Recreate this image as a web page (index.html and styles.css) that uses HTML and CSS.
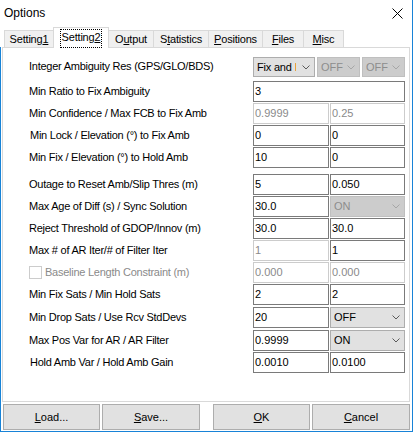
FILE: index.html
```html
<!DOCTYPE html>
<html>
<head>
<meta charset="utf-8">
<title>Options</title>
<link rel="stylesheet" href="styles.css">
</head>
<body>
<div class="window">
  <div class="titlebar">
    <span class="title">Options</span>
    <svg class="close" viewBox="0 0 11 11"><path d="M0.5 0.5L10.5 10.5M10.5 0.5L0.5 10.5" stroke="#000" stroke-width="1" fill="none"/></svg>
  </div>
  <div class="tabs">
    <div class="tab t-s1">Setting<u>1</u></div>
    <div class="tab tab-active t-s2"><span class="focus">Setting<u>2</u></span></div>
    <div class="tab t-out">O<u>u</u>tput</div>
    <div class="tab t-stat">S<u>t</u>atistics</div>
    <div class="tab t-pos"><u>P</u>ositions</div>
    <div class="tab t-files"><u>F</u>iles</div>
    <div class="tab t-misc"><u>M</u>isc</div>
  </div>
  <div class="client">
    <div class="panel">
      <div class="row row-first">
        <span class="label">Integer Ambiguity Res (GPS/GLO/BDS)</span>
        <div class="fields fields-3">
          <div class="combo combo-main"><span class="combo-text">Fix and<span class="caret"></span></span><svg class="chev" viewBox="0 0 8 5"><polyline points="0.5,0.5 4,4 7.5,0.5" fill="none" stroke="currentColor"/></svg></div>
          <div class="combo disabled"><span class="combo-text">OFF</span><svg class="chev" viewBox="0 0 8 5"><polyline points="0.5,0.5 4,4 7.5,0.5" fill="none" stroke="currentColor"/></svg></div>
          <div class="combo disabled"><span class="combo-text">OFF</span><svg class="chev" viewBox="0 0 8 5"><polyline points="0.5,0.5 4,4 7.5,0.5" fill="none" stroke="currentColor"/></svg></div>
        </div>
      </div>
      <div class="row row-gap4">
        <span class="label">Min Ratio to Fix Ambiguity</span>
        <div class="fields fields-1">
          <div class="edit">3</div>
        </div>
      </div>
      <div class="row">
        <span class="label">Min Confidence / Max FCB to Fix Amb</span>
        <div class="fields">
          <div class="edit disabled">0.9999</div>
          <div class="edit disabled">0.25</div>
        </div>
      </div>
      <div class="row">
        <span class="label shift">Min Lock / Elevation (°) to Fix Amb</span>
        <div class="fields">
          <div class="edit">0</div>
          <div class="edit">0</div>
        </div>
      </div>
      <div class="row">
        <span class="label">Min Fix / Elevation (°) to Hold Amb</span>
        <div class="fields">
          <div class="edit">10</div>
          <div class="edit">0</div>
        </div>
      </div>
      <div class="row row-gap6">
        <span class="label">Outage to Reset Amb/Slip Thres (m)</span>
        <div class="fields">
          <div class="edit">5</div>
          <div class="edit">0.050</div>
        </div>
      </div>
      <div class="row">
        <span class="label">Max Age of Diff (s) / Sync Solution</span>
        <div class="fields">
          <div class="edit">30.0</div>
          <div class="combo disabled"><span class="combo-text">ON</span><svg class="chev" viewBox="0 0 8 5"><polyline points="0.5,0.5 4,4 7.5,0.5" fill="none" stroke="currentColor"/></svg></div>
        </div>
      </div>
      <div class="row">
        <span class="label">Reject Threshold of GDOP/Innov (m)</span>
        <div class="fields">
          <div class="edit">30.0</div>
          <div class="edit">30.0</div>
        </div>
      </div>
      <div class="row">
        <span class="label">Max # of AR Iter/# of Filter Iter</span>
        <div class="fields">
          <div class="edit disabled">1</div>
          <div class="edit">1</div>
        </div>
      </div>
      <div class="row">
        <span class="label label-disabled"><span class="checkbox"></span>Baseline Length Constraint (m)</span>
        <div class="fields">
          <div class="edit disabled">0.000</div>
          <div class="edit disabled">0.000</div>
        </div>
      </div>
      <div class="row">
        <span class="label">Min Fix Sats / Min Hold Sats</span>
        <div class="fields">
          <div class="edit">2</div>
          <div class="edit">2</div>
        </div>
      </div>
      <div class="row row-gap2">
        <span class="label">Min Drop Sats / Use Rcv StdDevs</span>
        <div class="fields">
          <div class="edit">20</div>
          <div class="combo"><span class="combo-text">OFF</span><svg class="chev" viewBox="0 0 8 5"><polyline points="0.5,0.5 4,4 7.5,0.5" fill="none" stroke="currentColor"/></svg></div>
        </div>
      </div>
      <div class="row row-gap2">
        <span class="label">Max Pos Var for AR / AR Filter</span>
        <div class="fields">
          <div class="edit">0.9999</div>
          <div class="combo"><span class="combo-text">ON</span><svg class="chev" viewBox="0 0 8 5"><polyline points="0.5,0.5 4,4 7.5,0.5" fill="none" stroke="currentColor"/></svg></div>
        </div>
      </div>
      <div class="row">
        <span class="label shift">Hold Amb Var / Hold Amb Gain</span>
        <div class="fields">
          <div class="edit">0.0010</div>
          <div class="edit">0.0100</div>
        </div>
      </div>
    </div>
    <div class="buttons">
      <div class="btn-group">
        <div class="btn btn-a"><u>L</u>oad...</div>
        <div class="btn btn-b"><u>S</u>ave...</div>
      </div>
      <div class="btn-group">
        <div class="btn btn-a"><u>O</u>K</div>
        <div class="btn btn-b"><u>C</u>ancel</div>
      </div>
    </div>
  </div>
</div>
</body>
</html>
```

FILE: styles.css
```css
* {
  box-sizing: border-box;
}

body {
  margin: 0;
  font-family: "Liberation Sans", Arial, sans-serif;
  font-size: 11px;
  color: #000;
  background: #fff;
}

.window {
  width: 413px;
  height: 432px;
  background: #fff;
  border-right: 1px solid #1883d7;
  border-bottom: 1px solid #1883d7;
  display: flex;
  flex-direction: column;
}

/* title bar */
.titlebar {
  height: 27px;
  flex: 0 0 27px;
  display: flex;
  justify-content: space-between;
  align-items: flex-start;
}

.title {
  font-size: 12px;
  line-height: 14px;
  margin: 6px 0 0 4px;
}

.close {
  width: 11px;
  height: 11px;
  margin: 8px 9px 0 0;
}

/* tabs */
.tabs {
  height: 20px;
  flex: 0 0 20px;
  display: flex;
  align-items: flex-end;
  padding-left: 5px;
}

.tab {
  height: 17px;
  margin-left: -1px;
  border: 1px solid #d9d9d9;
  border-bottom: none;
  background: #f0f0f0;
  display: flex;
  align-items: center;
  justify-content: center;
  line-height: 13px;
  letter-spacing: -0.2px;
  padding-top: 1px;
}

.tab-active {
  height: 21px;
  margin-bottom: -1px;
  background: #fff;
  position: relative;
  z-index: 1;
  align-items: flex-start;
  padding-top: 1px;
}

.focus {
  border: 1px dotted #000;
  padding: 1px 1px 3px 1px;
  line-height: 13px;
}

.t-s1 { width: 50px; }
.t-s2 { width: 56px; }
.t-out { width: 46px; }
.t-stat { width: 56px; }
.t-pos { width: 55px; }
.t-files { width: 42px; }
.t-misc { width: 41px; }

/* client */
.client {
  flex: 1;
  border-left: 1px solid #1883d7;
  display: flex;
  flex-direction: column;
}

.panel {
  height: 355px;
  margin: 0 2px 0 1px;
  border: 1px solid #d9d9d9;
  padding: 9px 4px 0 26px;
  display: flex;
  flex-direction: column;
}

.row {
  height: 21px;
  margin-top: 1px;
  display: flex;
  align-items: center;
}

.row-first {
  height: 20px;
  margin-top: 0;
}

.row-gap4 { margin-top: 4px; }
.row-gap6 { margin-top: 6px; }
.row-gap2 { margin-top: 2px; }

.label {
  flex: 1;
  white-space: nowrap;
  letter-spacing: -0.25px;
  line-height: 13px;
  margin-top: -1px;
  display: flex;
  align-items: center;
}

.shift {
  padding-left: 1px;
}

.label-disabled {
  color: #8a8a8a;
}

.checkbox {
  width: 13px;
  height: 13px;
  border: 1px solid #cccccc;
  background: #fff;
  margin-right: 3px;
  flex: 0 0 13px;
}

.fields {
  width: 152px;
  height: 100%;
  display: grid;
  grid-template-columns: 76px 75px;
  column-gap: 1px;
}

.fields-1 {
  grid-template-columns: 152px;
}

.fields-3 {
  grid-template-columns: 62px 43px 43px;
  column-gap: 2px;
}

.edit {
  height: 100%;
  border: 1px solid #7a7a7a;
  background: #fff;
  padding-left: 1px;
  display: flex;
  align-items: center;
  line-height: 13px;
  white-space: nowrap;
  overflow: hidden;
}

.edit.disabled {
  border-color: #cccccc;
  color: #8a8a8a;
}

.combo {
  height: 100%;
  border: 1px solid #adadad;
  background: #e1e1e1;
  padding: 0 4px 0 3px;
  display: flex;
  align-items: center;
  justify-content: space-between;
  line-height: 13px;
  color: #000;
}

.combo .chev {
  width: 8px;
  height: 5px;
  color: #5a5a5a;
  flex: 0 0 8px;
}

.combo.disabled {
  background: #cccccc;
  border-color: #bfbfbf;
  color: #8d8d8d;
}

.combo.disabled .chev {
  color: #a6a6a6;
}

.combo-text {
  white-space: nowrap;
  display: flex;
  align-items: center;
}

.combo-main .combo-text {
  letter-spacing: -0.2px;
}

.caret {
  width: 1px;
  height: 8px;
  margin-left: 3px;
  background: #e8a33c;
}

/* buttons */
.buttons {
  height: 26px;
  margin: 2px 2px 0 2px;
  display: flex;
  justify-content: space-between;
}

.btn-group {
  display: flex;
  gap: 2px;
}

.btn {
  height: 26px;
  border: 1px solid #adadad;
  background: #e1e1e1;
  display: flex;
  align-items: center;
  justify-content: center;
  line-height: 13px;
}

.btn-a { width: 97px; }
.btn-b { width: 98px; }
```
